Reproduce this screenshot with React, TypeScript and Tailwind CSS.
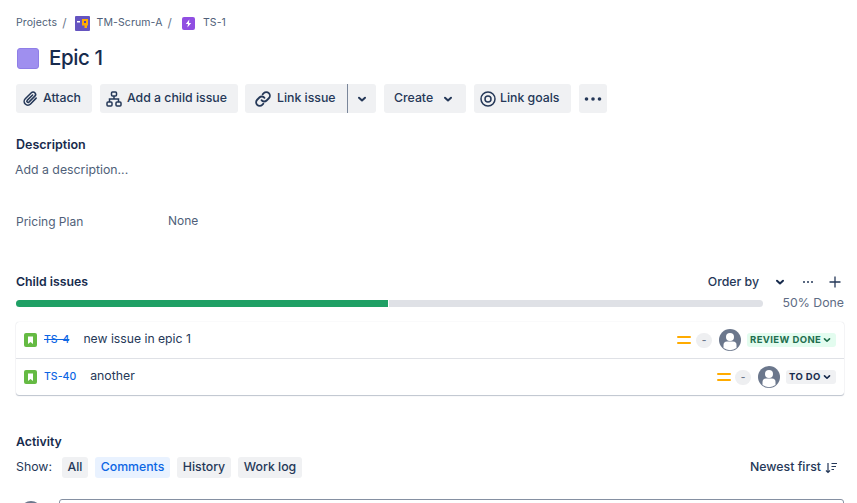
import React from "react";

const Chevron = ({ className = "" }: { className?: string }) => (
  <svg width="12" height="12" viewBox="0 0 12 12" className={className} fill="none" stroke="currentColor" strokeWidth="2" strokeLinecap="round" strokeLinejoin="round">
    <path d="M3 4.700 6 7.500 9 4.700" />
  </svg>
);

const Btn = ({ children, className = "" }: { children: React.ReactNode; className?: string }) => (
  <div className={`h-[29px] flex items-center bg-[#f0f1f3] rounded-[3px] text-[12.3px] font-medium text-[#253858] ${className}`}>{children}</div>
);

const Tab = ({ children, className = "" }: { children: React.ReactNode; className?: string }) => (
  <div className={`h-[21px] flex items-center justify-center rounded-[3px] text-[12.3px] font-medium ${className}`}>{children}</div>
);

const Avatar = () => (
  <svg width="22" height="22" viewBox="0 0 22 22">
    <circle cx="11" cy="11" r="11" fill="#6b778c" />
    <circle cx="11" cy="8" r="4" fill="#fff" />
    <path d="M4.500 19v-3a3.500 3.500 0 0 1 3.500-3.500h6a3.500 3.500 0 0 1 3.500 3.500v3a11 11 0 0 1-13 0Z" fill="#fff" />
  </svg>
);

const Priority = () => (
  <svg width="14" height="10" viewBox="0 0 14 10">
    <rect x="0" y="1" width="14" height="2" rx="1" fill="#ffab00" />
    <rect x="0" y="7" width="14" height="2" rx="1" fill="#ffab00" />
  </svg>
);

const Story = () => (
  <svg width="13" height="14" viewBox="0 0 13 14">
    <rect width="13" height="14" rx="2" fill="#65ba43" />
    <path d="M4 3.500h5v7.500L6.500 9 4 11Z" fill="#fff" />
  </svg>
);

const Dash = () => (
  <div className="w-[16px] h-[15px] rounded-full bg-[#eeeff1] flex items-center justify-center text-[10px] font-semibold text-[#6b778c] leading-none">-</div>
);

export default function App() {
  return (
    <div className="w-[857px] h-[503px] overflow-hidden bg-white text-[#172b4d]" style={{ fontFamily: "Inter, sans-serif" }}>
      <div className="pl-[16px] pt-[15px] pr-[13px]">
        <div className="h-[16px] flex items-center text-[10.5px] text-[#505f79] tracking-[0.1px]">
          <span>Projects</span>
          <span className="ml-[5px] text-[#6b778c] text-[12px]">/</span>
          <svg width="15" height="15" viewBox="0 0 15 15" className="ml-[8px]">
            <rect width="15" height="15" rx="1" fill="#6554c0" />
            <rect x="2" y="5" width="3" height="1.500" fill="#fff" />
            <path d="M7 3h6v6.500h-1V12H9.500V9.500H7Z" fill="#ffab00" />
            <rect x="9" y="5" width="2" height="2" fill="#5243aa" />
          </svg>
          <span className="ml-[7px]">TM-Scrum-A</span>
          <span className="ml-[5px] text-[#6b778c] text-[12px]">/</span>
          <svg width="13" height="13" viewBox="0 0 13 13" className="ml-[10px]">
            <rect width="13" height="13" rx="2" fill="#904ee2" />
            <path d="M7.300 2.500 3.800 7h2.200l-.6 3.500L9.200 6H7Z" fill="#fff" />
          </svg>
          <span className="ml-[8px]">TS-1</span>
        </div>

        <div className="mt-[13px] h-[28px] flex items-center">
          <div className="ml-[1px] w-[22px] h-[21px] rounded-[3px] bg-[#9f8fef] border border-[#8f7ee7]" />
          <h1 className="ml-[10px] text-[20.5px] font-medium tracking-[-0.4px] text-[#172b4d]">Epic 1</h1>
        </div>

        <div className="mt-[12px] flex">
          <Btn className="w-[76px] pl-[6px]">
            <svg width="17" height="17" viewBox="0 0 24 24" fill="none" stroke="#253858" strokeWidth="2.200" strokeLinecap="round" strokeLinejoin="round">
              <path d="M20 11.500 12 19.800a5.200 5.200 0 0 1-7.400-7.400l8.600-8.600a3.400 3.400 0 0 1 4.900 4.900l-8.400 8.400a1.700 1.700 0 0 1-2.400-2.400l7.700-7.700" />
            </svg>
            <span className="ml-[4px]">Attach</span>
          </Btn>
          <Btn className="ml-[8px] w-[138px] pl-[6px]">
            <svg width="16" height="16" viewBox="0 0 16 16" fill="none" stroke="#253858" strokeWidth="1.500">
              <rect x="5.500" y="1" width="5" height="4" rx="1" />
              <rect x="1" y="11" width="5" height="4" rx="1" />
              <rect x="10" y="11" width="5" height="4" rx="1" />
              <path d="M8 5v3M3.500 11V8h9v3" />
            </svg>
            <span className="ml-[5px]">Add a child issue</span>
          </Btn>
          <div className="ml-[7px] w-[131px] h-[29px] flex">
            <Btn className="w-[103px] pl-[9px] rounded-r-none border-r border-[#7a869a]">
              <svg width="18" height="18" viewBox="0 0 24 24" fill="none" stroke="#253858" strokeWidth="2.400" strokeLinecap="round" strokeLinejoin="round">
                <path d="M10 13.500a4.500 4.500 0 0 0 6.800.5l3-3a4.800 4.800 0 0 0-6.800-6.800l-1.500 1.500" />
                <path d="M14 10.500a4.500 4.500 0 0 0-6.800-.5l-3 3a4.800 4.800 0 0 0 6.800 6.800l1.500-1.500" />
              </svg>
              <span className="ml-[5px]">Link issue</span>
            </Btn>
            <Btn className="w-[28px] justify-center rounded-l-none"><Chevron /></Btn>
          </div>
          <Btn className="ml-[8px] w-[82px] pl-[10px]">
            <span>Create</span>
            <Chevron className="ml-[9px]" />
          </Btn>
          <Btn className="ml-[8px] w-[97px] pl-[6px]">
            <svg width="16" height="16" viewBox="0 0 16 16" fill="none" stroke="#253858" strokeWidth="1.500">
              <circle cx="8" cy="8" r="7" />
              <circle cx="8" cy="8" r="3" />
            </svg>
            <span className="ml-[4px]">Link goals</span>
          </Btn>
          <Btn className="ml-[8px] w-[28px] justify-center">
            <svg width="18" height="4" viewBox="0 0 18 4" fill="#253858">
              <circle cx="2.500" cy="2" r="1.800" />
              <circle cx="9" cy="2" r="1.800" />
              <circle cx="15.500" cy="2" r="1.800" />
            </svg>
          </Btn>
        </div>

        <div className="mt-[23px] text-[12.5px] leading-[18px] font-semibold text-[#172b4d]">Description</div>
        <div className="mt-[7px] -ml-[1px] text-[12.3px] leading-[18px] text-[#505f79]">Add a description...</div>

        <div className="mt-[33px] flex text-[12px] leading-[18px] text-[#505f79]">
          <span className="w-[152px] pt-[1px]">Pricing Plan</span>
          <span>None</span>
        </div>

        <div className="mt-[42px] h-[18px] flex items-center text-[12.3px]">
          <span className="font-semibold">Child issues</span>
          <span className="ml-auto mr-[1px] font-medium text-[#253858]">Order by</span>
          <Chevron className="ml-[14px]" />
          <svg width="12" height="4" viewBox="0 0 12 4" fill="#253858" className="ml-[16px]">
            <circle cx="2" cy="2" r="1" /><circle cx="6" cy="2" r="1" /><circle cx="10" cy="2" r="1" />
          </svg>
          <svg width="12" height="12" viewBox="0 0 12 12" stroke="#253858" strokeWidth="1.300" className="ml-[15px] mr-[3px]">
            <path d="M6 .5v11M.5 6h11" />
          </svg>
        </div>

        <div className="mt-[5px] h-[14px] flex items-center">
          <div className="w-[747px] h-[7px] rounded-full bg-[#dfe1e6] overflow-hidden">
            <div className="h-full w-[373px] bg-[#1fa065] border-r border-white" />
          </div>
          <span className="ml-auto text-[12.3px] text-[#5e6c84] pt-[1px]">50% Done</span>
        </div>

        <div className="mt-[12px] w-[828px] h-[73px] rounded-[3px] bg-white shadow-[0_1px_1px_rgba(9,30,66,0.25),0_0_1px_rgba(9,30,66,0.2)] flex flex-col">
          <div className="h-[37px] flex items-center border-b border-[#dfe1e6] pl-[8px] pr-[8px]">
            <Story />
            <span className="ml-[7px] text-[10.5px] font-medium text-[#0c66e4] line-through">TS-4</span>
            <span className="ml-[14px] text-[12.2px] text-[#253858] leading-none -mt-[1px]">new issue in epic 1</span>
            <div className="ml-auto flex items-center">
              <Priority />
              <div className="ml-[5px]"><Dash /></div>
              <div className="ml-[7px]"><Avatar /></div>
              <div className="ml-[6px] h-[14px] w-[89px] rounded-[3px] bg-[#e3fcef] text-[#216e4e] text-[9.5px] font-bold tracking-[0.4px] flex items-center pl-[3px]">
                REVIEW DONE<Chevron className="w-[10px] h-[10px] ml-[1px]" />
              </div>
            </div>
          </div>
          <div className="flex-1 flex items-center pl-[8px] pr-[8px]">
            <Story />
            <span className="ml-[7px] text-[10.5px] font-medium text-[#0c66e4]">TS-40</span>
            <span className="ml-[14px] text-[12.3px] text-[#253858] leading-none -mt-[2px]">another</span>
            <div className="ml-auto flex items-center">
              <Priority />
              <div className="ml-[4px]"><Dash /></div>
              <div className="ml-[7px]"><Avatar /></div>
              <div className="ml-[6px] h-[14px] w-[50px] rounded-[3px] bg-[#f0f1f3] text-[#172b4d] text-[9.5px] font-bold tracking-[0.4px] flex items-center pl-[3px]">
                TO DO<Chevron className="w-[10px] h-[10px] ml-[1px]" />
              </div>
            </div>
          </div>
        </div>

        <div className="mt-[38px] text-[12.3px] leading-[18px] font-semibold">Activity</div>
        <div className="mt-[6px] h-[21px] flex items-center">
          <span className="w-[46px] text-[12.3px] text-[#253858]">Show:</span>
          <Tab className="w-[26px] bg-[#f0f1f3] text-[#253858]">All</Tab>
          <Tab className="ml-[7px] w-[75px] bg-[#e9f2ff] text-[#0c66e4]">Comments</Tab>
          <Tab className="ml-[7px] w-[54px] bg-[#f0f1f3] text-[#253858]">History</Tab>
          <Tab className="ml-[7px] w-[64px] bg-[#f0f1f3] text-[#253858]">Work log</Tab>
          <span className="ml-auto mr-[1px] text-[12.3px] font-medium text-[#253858]">Newest first</span>
          <svg width="13" height="12" viewBox="0 0 13 12" fill="none" stroke="#253858" strokeWidth="1.200" className="ml-[3px] mr-[6px]">
            <path d="M3 1v9.500M1 8.500l2 2 2-2M6.500 1.500H12M6.500 4.500H11M6.500 7.500H9" />
          </svg>
        </div>

        <div className="mt-[23px] flex">
          <div className="ml-[4px] w-[22px] h-[22px] rounded-full bg-[#6b778c]" />
          <div className="ml-[17px] w-[787px] h-[40px] -mt-[2px] rounded-[3px] border border-[#8590a2] bg-white" />
        </div>
      </div>
    </div>
  );
}
